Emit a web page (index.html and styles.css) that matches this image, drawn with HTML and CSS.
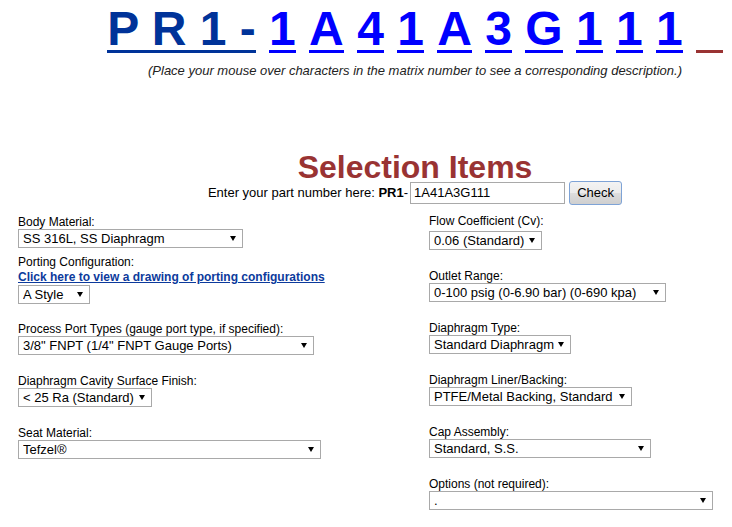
FILE: index.html
```html
<!DOCTYPE html>
<html lang="en">
<head>
<meta charset="utf-8">
<title>Selection Items</title>
<link rel="stylesheet" href="styles.css">
</head>
<body>
<div class="page">
  <div class="head">
    <div class="matrix"><a class="ch pre" href="#">P R 1 -</a> <a class="ch" href="#">1</a> <a class="ch" href="#">A</a> <a class="ch" href="#">4</a> <a class="ch" href="#">1</a> <a class="ch" href="#">A</a> <a class="ch" href="#">3</a> <a class="ch" href="#">G</a> <a class="ch" href="#">1</a> <a class="ch" href="#">1</a> <a class="ch" href="#">1</a> <span class="ch next">&nbsp;&nbsp;</span></div>
    <div class="hint">(Place your mouse over characters in the matrix number to see a corresponding description.)</div>

    <h1 class="title">Selection Items</h1>
    <div class="entry">
      <span class="entry-text">Enter your part number here: <b>PR1</b>-</span>
      <input class="part" type="text" value="1A41A3G111">
      <button class="check" type="button">Check</button>
    </div>
  </div>

  <div class="form">
    <div class="col left">
      <div class="field">
        <div class="lbl">Body Material:</div>
        <span class="sel w-body"><select><option>SS 316L, SS Diaphragm</option></select></span>
      </div>
      <div class="field tight">
        <div class="lbl">Porting Configuration:</div>
        <a class="draw" href="#">Click here to view a drawing of porting configurations</a>
        <span class="sel w-style"><select><option>A Style</option></select></span>
      </div>
      <div class="field after-link">
        <div class="lbl">Process Port Types (gauge port type, if specified):</div>
        <span class="sel w-port"><select><option>3/8" FNPT (1/4" FNPT Gauge Ports)</option></select></span>
      </div>
      <div class="field">
        <div class="lbl">Diaphragm Cavity Surface Finish:</div>
        <span class="sel w-finish"><select><option>&lt; 25 Ra (Standard)</option></select></span>
      </div>
      <div class="field">
        <div class="lbl">Seat Material:</div>
        <span class="sel w-seat"><select><option>Tefzel®</option></select></span>
      </div>
    </div>
    <div class="col right">
      <div class="field first">
        <div class="lbl">Flow Coefficient (Cv):</div>
        <span class="sel w-flow"><select><option>0.06 (Standard)</option></select></span>
      </div>
      <div class="field">
        <div class="lbl">Outlet Range:</div>
        <span class="sel w-outlet"><select><option>0-100 psig (0-6.90 bar) (0-690 kpa)</option></select></span>
      </div>
      <div class="field">
        <div class="lbl">Diaphragm Type:</div>
        <span class="sel w-dtype"><select><option>Standard Diaphragm</option></select></span>
      </div>
      <div class="field">
        <div class="lbl">Diaphragm Liner/Backing:</div>
        <span class="sel w-liner"><select><option>PTFE/Metal Backing, Standard</option></select></span>
      </div>
      <div class="field">
        <div class="lbl">Cap Assembly:</div>
        <span class="sel w-cap"><select><option>Standard, S.S.</option></select></span>
      </div>
      <div class="field">
        <div class="lbl">Options (not required):</div>
        <span class="sel w-opt"><select><option>.</option></select></span>
      </div>
    </div>
  </div>
</div>
</body>
</html>
```

FILE: styles.css
```css
body {
  margin: 8px;
  font-family: "Liberation Sans", Arial, sans-serif;
  color: #000;
  background: #fff;
}

/* the heading block is centred on the original (wider) page's centre line */
.head {
  padding-left: 98px;
}

/* matrix number */
.matrix {
  text-align: center;
  font-size: 48px;
  font-weight: bold;
  line-height: 42px;
  white-space: nowrap;
}

.ch {
  display: inline-block;
  color: #0000ff;
  text-decoration: none;
  border-bottom: 3px solid currentColor;
}

.ch.pre {
  color: #003399;
}

.ch.next {
  color: #993333;
}

.hint {
  margin-top: 10px;
  font-size: 13px;
  font-style: italic;
  line-height: 15px;
  text-align: center;
  color: #222;
  white-space: nowrap;
}

.title {
  margin: 75px 0 0;
  font-size: 32px;
  font-weight: bold;
  line-height: 28px;
  color: #993333;
  text-align: center;
}

/* part number entry */
.entry {
  display: flex;
  justify-content: center;
  align-items: center;
  height: 25px;
  margin-top: -1px;
  font-size: 13px;
}

.entry-text {
  white-space: pre;
}

.part {
  box-sizing: border-box;
  width: 155px;
  height: 22px;
  margin: 0 0 0 2px;
  padding: 0 3px;
  border: 1px solid #a9a9a9;
  font: 13px "Liberation Sans", Arial, sans-serif;
  color: #000;
  outline: none;
}

.check {
  box-sizing: border-box;
  width: 53px;
  height: 24px;
  margin: 0 0 0 4px;
  padding: 0;
  border: 1px solid #7ea3d6;
  border-radius: 3px;
  background: linear-gradient(#f3f3f3 0%, #ebebeb 50%, #dddddd 51%, #cfcfcf 100%);
  font: 13px "Liberation Sans", Arial, sans-serif;
  color: #000;
}

/* form */
.form {
  display: grid;
  grid-template-columns: 411px 1fr;
  align-items: start;
  margin-top: 10px;
  padding-left: 10px;
}

.left .field + .field {
  margin-top: 19px;
}

.left .field.tight {
  margin-top: 7px;
}

.left .field.after-link {
  margin-top: 18px;
}

.right {
  margin-top: -1px;
}

.right .field + .field {
  margin-top: 19px;
}

.right .field.first .sel {
  margin-top: 3px;
}

.lbl {
  font-size: 12px;
  line-height: 14px;
}

.draw {
  display: block;
  width: max-content;
  margin-top: 1px;
  font-size: 12px;
  font-weight: bold;
  line-height: 15px;
  color: #0c3a9c;
  text-decoration: underline;
}

.sel {
  position: relative;
  display: block;
  height: 19px;
}

.sel select {
  box-sizing: border-box;
  display: block;
  width: 100%;
  height: 19px;
  margin: 0;
  padding: 0 0 0 4px;
  border: 1px solid #a9a9a9;
  border-radius: 0;
  background: #fff;
  -webkit-appearance: none;
  appearance: none;
  font: 13px "Liberation Sans", Arial, sans-serif;
  color: #000;
  outline: none;
}

.sel::after {
  content: "";
  position: absolute;
  right: 7px;
  top: 7px;
  border-left: 3px solid transparent;
  border-right: 3px solid transparent;
  border-top: 5px solid #000;
  pointer-events: none;
}

.w-body { width: 225px; }
.w-style { width: 72px; }
.w-port { width: 296px; }
.w-finish { width: 134px; }
.w-seat { width: 303px; }
.w-flow { width: 113px; }
.w-outlet { width: 237px; }
.w-dtype { width: 142px; }
.w-liner { width: 203px; }
.w-cap { width: 222px; }
.w-opt { width: 284px; }
```
